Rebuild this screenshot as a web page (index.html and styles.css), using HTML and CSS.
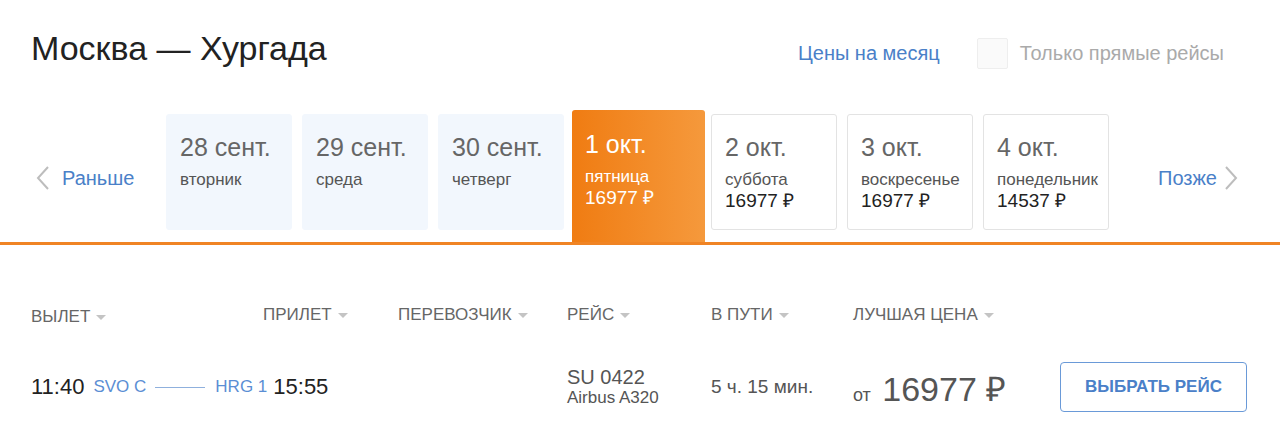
FILE: index.html
```html
<!DOCTYPE html>
<html lang="ru">
<head>
    <meta charset="UTF-8">
    <meta name="viewport" content="width=device-width, initial-scale=1.0">
    <title>Москва — Хургада</title>
    <link rel="stylesheet" href="styles.css">
</head>
<body>
    <!-- Route header -->
    <div class="top">
        <h1 class="route-title">Москва — Хургада</h1>
        <div class="top-right">
            <a class="month-link" href="#">Цены на месяц</a>
            <label class="direct">
                <span class="box"></span>
                Только прямые рейсы
            </label>
        </div>
    </div>

    <!-- Date strip -->
    <div class="dates">
        <a class="nav prev" href="#">
            <svg width="14" height="24" viewBox="0 0 14 24"><path d="M12 1 L2 12 L12 23" fill="none" stroke="#bdbdbd" stroke-width="2"/></svg>
            Раньше
        </a>
        <div class="day past">
            <div class="day-date">28 сент.</div>
            <div class="day-name">вторник</div>
        </div>
        <div class="day past">
            <div class="day-date">29 сент.</div>
            <div class="day-name">среда</div>
        </div>
        <div class="day past">
            <div class="day-date">30 сент.</div>
            <div class="day-name">четверг</div>
        </div>
        <div class="day active">
            <div class="day-date">1 окт.</div>
            <div class="day-name">пятница</div>
            <div class="day-price">16977 ₽</div>
        </div>
        <div class="day">
            <div class="day-date">2 окт.</div>
            <div class="day-name">суббота</div>
            <div class="day-price">16977 ₽</div>
        </div>
        <div class="day">
            <div class="day-date">3 окт.</div>
            <div class="day-name">воскресенье</div>
            <div class="day-price">16977 ₽</div>
        </div>
        <div class="day">
            <div class="day-date">4 окт.</div>
            <div class="day-name">понедельник</div>
            <div class="day-price">14537 ₽</div>
        </div>
        <a class="nav next" href="#">
            Позже
            <svg width="14" height="24" viewBox="0 0 14 24"><path d="M2 1 L12 12 L2 23" fill="none" stroke="#bdbdbd" stroke-width="2"/></svg>
        </a>
    </div>

    <!-- Flights table -->
    <div class="flights">
        <div class="th th-first">ВЫЛЕТ<span class="caret"></span></div>
        <div class="th">ПРИЛЕТ<span class="caret"></span></div>
        <div class="th">ПЕРЕВОЗЧИК<span class="caret"></span></div>
        <div class="th">РЕЙС<span class="caret"></span></div>
        <div class="th">В ПУТИ<span class="caret"></span></div>
        <div class="th">ЛУЧШАЯ ЦЕНА<span class="caret"></span></div>
        <div class="th"></div>

        <div class="td route">
            <span class="time">11:40</span>
            <span class="airport">SVO C</span>
            <span class="line"></span>
            <span class="airport">HRG 1</span>
            <span class="time">15:55</span>
        </div>
        <div class="td"></div>
        <div class="td flight">
            <div class="flight-no">SU 0422</div>
            <div class="plane">Airbus A320</div>
        </div>
        <div class="td duration">5 ч. 15 мин.</div>
        <div class="td price"><span class="from">от</span> 16977 ₽</div>
        <div class="td action"><button class="select-btn">ВЫБРАТЬ РЕЙС</button></div>
    </div>
</body>
</html>
```

FILE: styles.css
```css
/* Global */
body {
    margin: 0;
    font-family: "Liberation Sans", Arial, sans-serif;
    color: #222;
    background: #fff;
}

a {
    text-decoration: none;
}

/* Route header */
.top {
    display: flex;
    justify-content: space-between;
    align-items: center;
    padding: 24px 56px 0 31px;
    height: 48px;
}

.route-title {
    margin: 0;
    font-size: 34px;
    font-weight: normal;
    color: #222;
}

.top-right {
    display: flex;
    align-items: center;
    margin-top: 10px;
}

.month-link {
    font-size: 20px;
    color: #4a80c8;
    margin-right: 37px;
}

.direct {
    display: flex;
    align-items: center;
    font-size: 20px;
    color: #aaa;
}

.direct .box {
    width: 31px;
    height: 31px;
    box-sizing: border-box;
    border: 1px solid #eee;
    border-radius: 2px;
    background: #fafafa;
    margin-right: 12px;
}

/* Date strip */
.dates {
    display: flex;
    align-items: flex-end;
    gap: 10px;
    margin-top: 38px;
    height: 132px;
    padding-left: 36px;
    border-bottom: 3px solid #f08424;
}

.nav {
    display: flex;
    align-items: center;
    align-self: center;
    gap: 12px;
    font-size: 20px;
    color: #4a80c8;
    margin-top: 4px;
}

.nav.prev {
    width: 120px;
}

.nav.next {
    margin-left: 39px;
    gap: 7px;
}

.day {
    width: 126px;
    height: 116px;
    box-sizing: border-box;
    margin-bottom: 12px;
    padding: 18px 0 0 13px;
    border: 1px solid #e3e3e3;
    border-radius: 3px;
    background: #fff;
}

.day.past {
    border-color: #f2f7fd;
    background: #f2f7fd;
}

.day.active {
    width: 133px;
    height: 132px;
    margin: 0 -4px 0 -2px;
    padding-top: 20px;
    border: none;
    border-radius: 3px 3px 0 0;
    background: linear-gradient(to right, #f07c12, #f5993c);
    color: #fff;
}

.day-date {
    font-size: 25px;
    line-height: 28px;
    color: #666;
}

.day-name {
    margin-top: 9px;
    font-size: 17px;
    line-height: 20px;
    color: #555;
}

.day-price {
    font-size: 19px;
    line-height: 22px;
    color: #222;
}

.day.active .day-date,
.day.active .day-name,
.day.active .day-price {
    color: #fff;
}

/* Flights table */
.flights {
    display: grid;
    grid-template-columns: 232px 135px 169px 144px 142px 1fr auto;
    align-items: center;
    padding: 58px 33px 0 31px;
    row-gap: 35px;
}

.th {
    font-size: 17px;
    line-height: 20px;
    color: #666;
    display: flex;
    align-items: center;
}

.th-first {
    padding-top: 4px;
}

.caret {
    width: 0;
    height: 0;
    margin-left: 6px;
    border-left: 5px solid transparent;
    border-right: 5px solid transparent;
    border-top: 5px solid #c4c4c4;
}

.route {
    grid-column: span 2;
    display: flex;
    align-items: center;
}

.time {
    font-size: 22px;
    color: #222;
}

.airport {
    font-size: 17px;
    color: #5b8ed4;
    margin-left: 9px;
}

.airport + .time {
    margin-left: 6px;
}

.line {
    width: 50px;
    height: 1px;
    background: #8fb0dd;
    margin-left: 9px;
    margin-right: 1px;
}

.flight-no {
    font-size: 20px;
    color: #555;
    line-height: 22px;
}

.plane {
    font-size: 17px;
    color: #555;
    line-height: 20px;
}

.duration {
    font-size: 19px;
    color: #555;
}

.price {
    font-size: 34px;
    color: #555;
    padding-top: 2px;
}

.price .from {
    font-size: 18px;
    margin-right: 2px;
}

.select-btn {
    width: 187px;
    height: 50px;
    border: 1px solid #6a9ad8;
    border-radius: 4px;
    background: #fff;
    color: #4a80c8;
    font-family: "Liberation Sans", Arial, sans-serif;
    font-size: 17px;
    font-weight: bold;
    cursor: pointer;
}
```
